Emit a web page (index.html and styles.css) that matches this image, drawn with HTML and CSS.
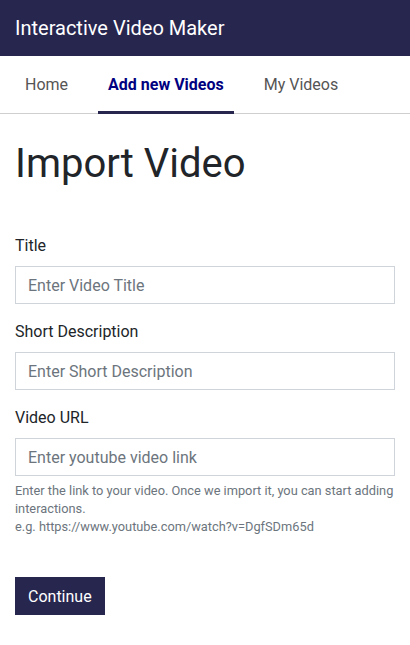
FILE: index.html
```html
<!DOCTYPE html>
<html>
<head>
<meta charset="utf-8">
<link rel="stylesheet" href="styles.css">
</head>
<body>
<header class="topbar">Interactive Video Maker</header>
<nav class="tabs">
  <a class="tab">Home</a>
  <a class="tab active">Add new Videos</a>
  <a class="tab">My Videos</a>
</nav>
<main class="content">
  <h1 class="page-title">Import Video</h1>
  <form class="form">
    <div class="field">
      <label class="label">Title</label>
      <input class="input" placeholder="Enter Video Title">
    </div>
    <div class="field">
      <label class="label">Short Description</label>
      <input class="input" placeholder="Enter Short Description">
    </div>
    <div class="field">
      <label class="label">Video URL</label>
      <input class="input" placeholder="Enter youtube video link">
      <p class="help">Enter the link to your video. Once we import it, you can start adding interactions.<br>e.g. https://www.youtube.com/watch?v=DgfSDm65d</p>
    </div>
    <button type="button" class="btn">Continue</button>
  </form>
</main>
</body>
</html>
```
FILE: styles.css
```css
* { box-sizing: border-box; }
body {
  margin: 0;
  font-family: Roboto, "Liberation Sans", sans-serif;
  color: #212529;
  background: #fff;
}
.topbar {
  background: #27264f;
  color: #fff;
  height: 56px;
  display: flex;
  align-items: center;
  padding: 0 15px;
  font-size: 20px;
}
.tabs {
  display: flex;
  gap: 20px;
  padding: 2px 15px 0;
  height: 58px;
  border-bottom: 1px solid #cfcfcf;
}
.tab {
  display: flex;
  align-items: center;
  padding: 0 10px;
  font-size: 16px;
  color: #555;
  border-bottom: 3px solid transparent;
  margin-bottom: -1px;
}
.tab.active {
  color: #000080;
  font-weight: 700;
  border-bottom-color: #27264f;
}
.content {
  padding: 0 15px;
}
.page-title {
  font-size: 40px;
  font-weight: 400;
  margin: 26px 0 46px;
  line-height: 1.2;
}
.field {
  display: flex;
  flex-direction: column;
  margin-bottom: 16px;
}
.label {
  font-size: 16px;
  line-height: 24px;
  margin-bottom: 8px;
}
.input {
  height: 38px;
  border: 1px solid #ced4da;
  padding: 0 12px;
  font-family: inherit;
  font-size: 16px;
  color: #495057;
  border-radius: 0;
  outline: none;
}
.input::placeholder { color: #6c757d; }
.help {
  margin: 6px 0 0;
  font-size: 12.8px;
  line-height: 18px;
  color: #6c757d;
}
.btn {
  margin-top: 25px;
  background: #27264f;
  color: #fff;
  border: none;
  height: 38px;
  padding: 0 13px;
  font-family: inherit;
  font-size: 16px;
  border-radius: 0;
}
```
